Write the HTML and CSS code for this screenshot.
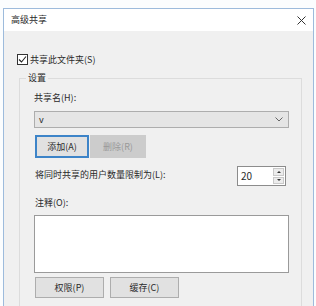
FILE: index.html
```html
<!DOCTYPE html>
<html lang="zh-CN">
<head>
    <meta charset="UTF-8">
    <title>高级共享</title>
    <link rel="stylesheet" href="styles.css">
</head>
<body>
  <div class="window">
    <div class="titlebar">
      <span class="title">高级共享</span>
      <svg class="close" width="9" height="9" viewBox="0 0 9 9">
        <path d="M0.5 0.5 L8.5 8.5 M8.5 0.5 L0.5 8.5" stroke="#333" stroke-width="1"/>
      </svg>
    </div>
    <div class="content">
      <label class="check-row">
        <span class="checkbox">
          <svg width="9" height="9" viewBox="0 0 9 9">
            <path d="M1 4.5 L3.5 7 L8 1.5" fill="none" stroke="#222" stroke-width="1.1"/>
          </svg>
        </span>
        共享此文件夹(S)
      </label>

      <fieldset class="group">
        <legend>设置</legend>
        <div class="field-label">共享名(H):</div>
        <div class="select">
          <span>v</span>
          <svg width="8" height="5" viewBox="0 0 8 5">
            <path d="M0.5 0.5 L4 4 L7.5 0.5" fill="none" stroke="#666" stroke-width="1"/>
          </svg>
        </div>
        <div class="btn-row">
          <button class="btn btn-add">添加(A)</button>
          <button class="btn btn-disabled">删除(R)</button>
        </div>
        <div class="limit-row">
          <span>将同时共享的用户数量限制为(L):</span>
          <div class="spin">
            <span class="spin-value">20</span>
            <div class="spin-btns">
              <div class="spin-btn"><span class="arrow-up"></span></div>
              <div class="spin-btn"><span class="arrow-down"></span></div>
            </div>
          </div>
        </div>
        <div class="field-label comment-label">注释(O):</div>
        <div class="textarea"></div>
        <div class="btn-row bottom-row">
          <button class="btn btn-wide">权限(P)</button>
          <button class="btn btn-wide">缓存(C)</button>
        </div>
      </fieldset>
    </div>
  </div>
</body>
</html>
```

FILE: styles.css
```css
body {
  margin: 0;
  background-color: #fbfdfe;
  font-family: "Noto Sans CJK SC", "Liberation Sans", sans-serif;
  font-size: 9px;
  color: #2a2a2a;
  overflow: hidden;
}

/* ventana del dialogo */
.window {
  margin: 8px 2px 0 3px;
  border: 1px solid #9dbbdc;
  border-bottom: none;
  background-color: #f0f0f0;
  height: 297px;
  overflow: hidden;
}

.titlebar {
  height: 22px;
  background-color: #ffffff;
  display: flex;
  align-items: center;
  justify-content: space-between;
  padding: 0 7px 0 7px;
}

.title {
  line-height: 12px;
}

.content {
  padding: 22px 11px 0 13px;
}

.check-row {
  display: flex;
  align-items: center;
  gap: 2px;
  height: 12px;
}

.checkbox {
  width: 9px;
  height: 9px;
  border: 1px solid #333;
  background-color: #fff;
  display: flex;
}

/* grupo "设置" */
.group {
  margin: 7px 0 0 2px;
  padding: 8px 12px 20px 14px;
  border: 1px solid #dcdcdc;
}

.group legend {
  padding: 0 2px;
  margin-left: -8px;
  line-height: 12px;
}

.field-label {
  line-height: 12px;
}

.select {
  margin-top: 7px;
  height: 15px;
  border: 1px solid #adadad;
  background-color: #e5e5e5;
  display: flex;
  align-items: center;
  justify-content: space-between;
  padding: 0 5px 0 4px;
}

.btn-row {
  display: flex;
  gap: 1px;
  margin-top: 7px;
  padding-left: 1px;
}

.btn {
  font-family: inherit;
  font-size: 9px;
  color: #2a2a2a;
  background-color: #e1e1e1;
  border: 1px solid #adadad;
  padding: 0;
  height: 23px;
}

.btn-add {
  width: 54px;
  border: 2px solid #3d84c8;
}

.btn-disabled {
  width: 56px;
  background-color: #cccccc;
  border-color: #cccccc;
  color: #999;
}

.limit-row {
  margin-top: 8px;
  display: flex;
  align-items: center;
  justify-content: space-between;
  padding-left: 1px;
  padding-right: 3px;
}

.limit-row > span {
  margin-top: -4px;
}

.spin {
  width: 47px;
  height: 18px;
  border: 1px solid #8c8c8c;
  background-color: #fff;
  display: flex;
  justify-content: space-between;
}

.spin-value {
  padding-left: 3px;
  line-height: 18px;
  font-size: 10px;
}

.spin-btns {
  width: 11px;
  display: flex;
  flex-direction: column;
  gap: 1px;
  padding: 1px 1px 1px 0;
}

.spin-btn {
  flex: 1;
  background-color: #ececec;
  border: 1px solid #c9c9c9;
  display: flex;
  align-items: center;
  justify-content: center;
}

.arrow-up {
  border-left: 2px solid transparent;
  border-right: 2px solid transparent;
  border-bottom: 2px solid #333;
}

.arrow-down {
  border-left: 2px solid transparent;
  border-right: 2px solid transparent;
  border-top: 2px solid #333;
}

.comment-label {
  margin-top: 11px;
  padding-left: 1px;
}

.textarea {
  margin-top: 6px;
  height: 56px;
  border: 1px solid #9a9a9a;
  background-color: #fff;
}

.bottom-row {
  margin-top: 4px;
  gap: 6px;
}

.btn-wide {
  width: 69px;
  height: 21px;
}
```
